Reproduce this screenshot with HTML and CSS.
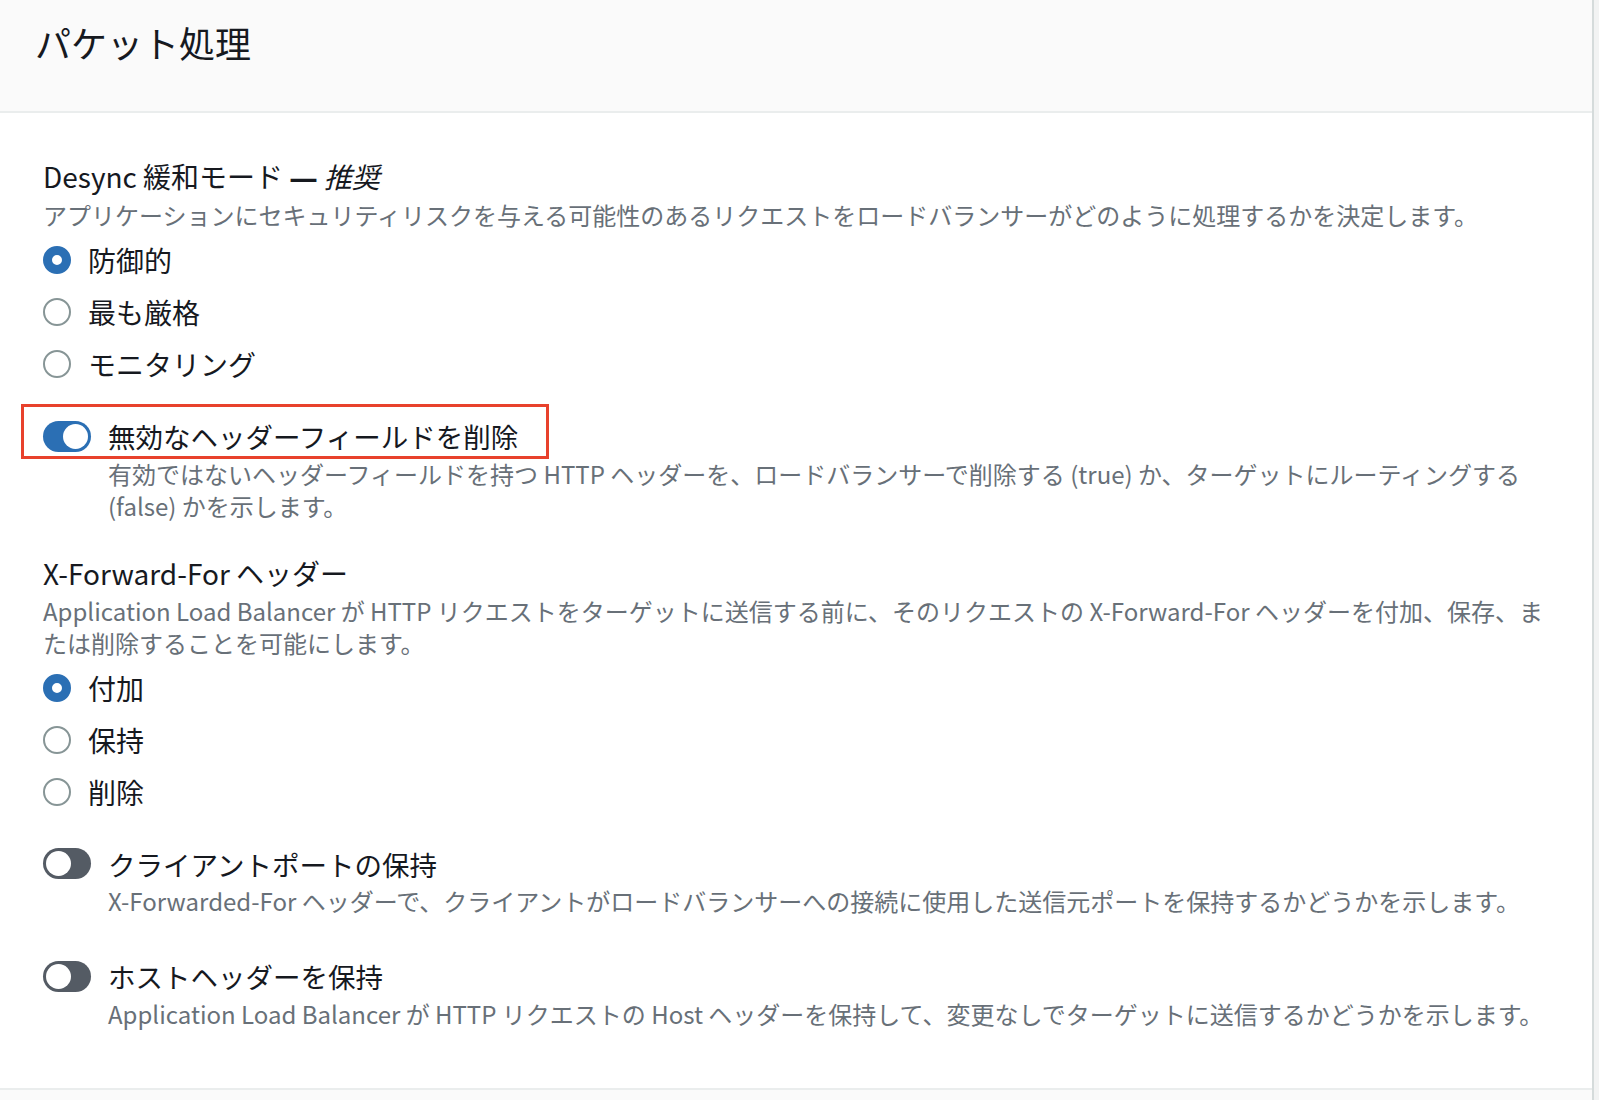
FILE: index.html
```html
<!DOCTYPE html>
<html lang="ja">
<head>
  <meta charset="UTF-8">
  <meta name="viewport" content="width=device-width, initial-scale=1.0">
  <title>パケット処理</title>
  <link rel="stylesheet" href="styles.css">
</head>
<body>
  <div class="page">
    <section class="panel">
      <header class="panel-header">
        <h2>パケット処理</h2>
      </header>

      <div class="panel-body">
        <div class="field">
          <div class="field-title">Desync 緩和モード <span class="dash">—</span> <em>推奨</em></div>
          <div class="field-desc">アプリケーションにセキュリティリスクを与える可能性のあるリクエストをロードバランサーがどのように処理するかを決定します。</div>
          <div class="radio-group">
            <label class="radio-row"><span class="radio checked"></span>防御的</label>
            <label class="radio-row"><span class="radio"></span>最も厳格</label>
            <label class="radio-row"><span class="radio"></span>モニタリング</label>
          </div>
        </div>

        <div class="field toggle-field after-radios">
          <div class="toggle-row">
            <span class="toggle on"><span class="knob"></span></span>
            <span class="toggle-label">無効なヘッダーフィールドを削除</span>
            <span class="highlight"></span>
          </div>
          <div class="toggle-desc">有効ではないヘッダーフィールドを持つ HTTP ヘッダーを、ロードバランサーで削除する (true) か、ターゲットにルーティングする (false) かを示します。</div>
        </div>

        <div class="field section-gap">
          <div class="field-title">X-Forward-For ヘッダー</div>
          <div class="field-desc">Application Load Balancer が HTTP リクエストをターゲットに送信する前に、そのリクエストの X-Forward-For ヘッダーを付加、保存、または削除することを可能にします。</div>
          <div class="radio-group">
            <label class="radio-row"><span class="radio checked"></span>付加</label>
            <label class="radio-row"><span class="radio"></span>保持</label>
            <label class="radio-row"><span class="radio"></span>削除</label>
          </div>
        </div>

        <div class="field toggle-field after-radios">
          <div class="toggle-row">
            <span class="toggle"><span class="knob"></span></span>
            <span class="toggle-label">クライアントポートの保持</span>
          </div>
          <div class="toggle-desc">X-Forwarded-For ヘッダーで、クライアントがロードバランサーへの接続に使用した送信元ポートを保持するかどうかを示します。</div>
        </div>

        <div class="field toggle-field after-toggle">
          <div class="toggle-row">
            <span class="toggle"><span class="knob"></span></span>
            <span class="toggle-label">ホストヘッダーを保持</span>
          </div>
          <div class="toggle-desc">Application Load Balancer が HTTP リクエストの Host ヘッダーを保持して、変更なしでターゲットに送信するかどうかを示します。</div>
        </div>
      </div>
    </section>
    <div class="next-panel"></div>
  </div>
</body>
</html>
```

FILE: styles.css
```css
body {
  margin: 0;
  padding: 0;
  background-color: #f2f3f3;
  font-family: "Noto Sans CJK JP", "Noto Sans", sans-serif;
  color: #16191f;
}
.page {
  width: 1592px;
  min-height: 1100px;
  background-color: #fafafa;
  border-right: 2px solid #d5dbdb;
}
.panel {
  background-color: white;
  border-bottom: 2px solid #eaeded;
}
.panel-header {
  background-color: #fafafa;
  border-bottom: 2px solid #eaeded;
  padding: 18px 35px 45px;
}
.panel-header h2 {
  margin: 0;
  font-size: 36px;
  line-height: 48px;
  font-weight: 400;
}
.panel-body {
  padding: 45px 43px 58px;
}
.field-title {
  font-size: 28px;
  line-height: 36px;
}
.field-title .dash {
  font-family: "Noto Sans", sans-serif;
  font-weight: 700;
}
.field-title em {
  font-style: italic;
}
.field-desc {
  margin-top: 4px;
  font-size: 24px;
  line-height: 32px;
  color: #687078;
}
.radio-group {
  margin-top: 3px;
  display: flex;
  flex-direction: column;
}
.radio-row {
  display: flex;
  align-items: center;
  gap: 17px;
  height: 52px;
  font-size: 28px;
}
.radio {
  box-sizing: border-box;
  width: 28px;
  height: 28px;
  border-radius: 50%;
  border: 2px solid #879596;
  background-color: white;
}
.radio.checked {
  border: 9px solid #2b6fb4;
}
.after-radios {
  margin-top: 28px;
}
.after-toggle {
  margin-top: 41px;
}
.section-gap {
  margin-top: 33px;
}
.toggle-row {
  position: relative;
  display: inline-flex;
  align-items: center;
  gap: 17px;
  height: 36px;
  font-size: 27.5px;
}
.toggle {
  position: relative;
  width: 48px;
  height: 31px;
  border-radius: 16px;
  background-color: #545b64;
}
.toggle.on {
  background-color: #2b6fb4;
}
.knob {
  position: absolute;
  top: 3px;
  left: 3px;
  width: 25px;
  height: 25px;
  border-radius: 50%;
  background-color: white;
}
.toggle.on .knob {
  left: 20px;
}
.highlight {
  position: absolute;
  left: -22px;
  top: -14px;
  width: 528px;
  height: 55px;
  box-sizing: border-box;
  border: 3px solid #e8412c;
}
.toggle-desc {
  margin-top: 1px;
  padding-left: 65px;
  font-size: 24px;
  line-height: 32px;
  color: #687078;
}
```
